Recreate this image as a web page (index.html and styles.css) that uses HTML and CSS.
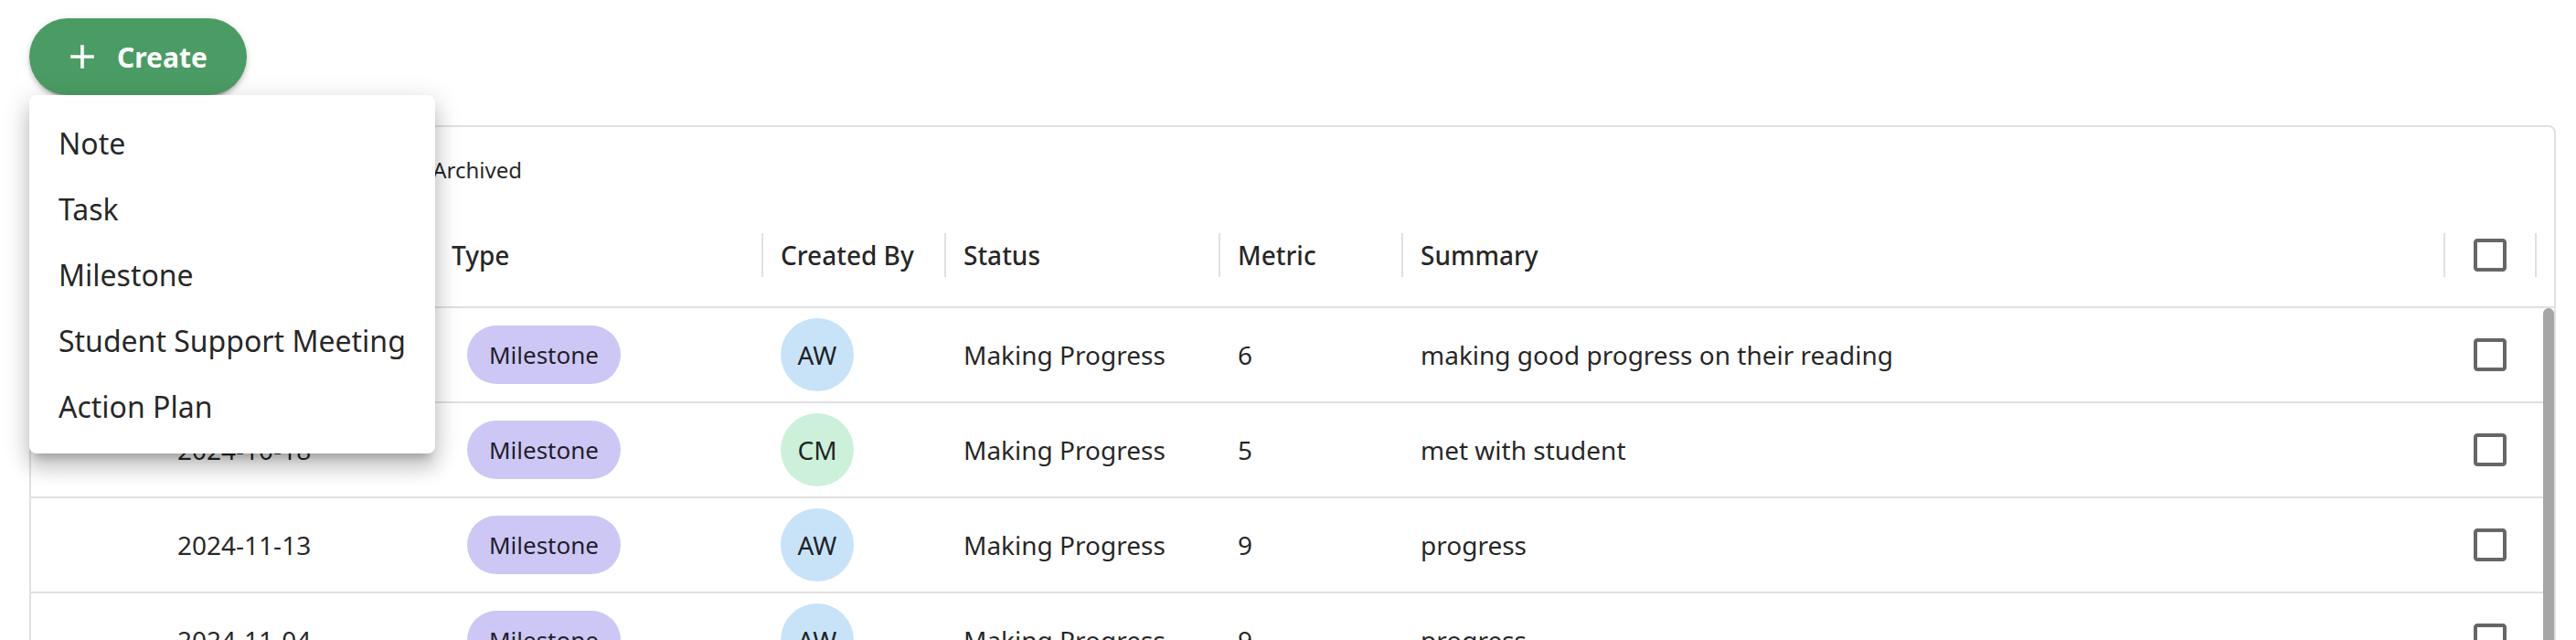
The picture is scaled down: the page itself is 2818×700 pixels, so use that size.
FILE: index.html
```
<!DOCTYPE html>
<html>
<head>
<meta charset="utf-8">
<title>Records</title>
<link rel="stylesheet" href="styles.css">
</head>
<body>
<div class="toolbarTop">
<button class="createBtn" type="button">
<svg viewBox="0 0 24 24"><path d="M19 13h-6v6h-2v-6H5v-2h6V5h2v6h6z"/></svg>
Create
</button>
</div>

<div class="gridCard">
<div class="gridTools">
<span class="switch"><span class="knob"></span></span>
<span class="toolLabel">Show Archived</span>
</div>

<div class="gridHead">
<div class="hcell c0"></div>
<div class="hcell cDate">Date</div>
<div class="hcell cType">Type</div>
<div class="hcell cBy">Created By</div>
<div class="hcell cStatus">Status</div>
<div class="hcell cMetric">Metric</div>
<div class="hcell cSum">Summary</div>
<div class="hcell cCheck"><svg class="box" viewBox="0 0 24 24"><path d="M19 5v14H5V5h14m0-2H5c-1.11 0-2 .9-2 2v14c0 1.1.89 2 2 2h14c1.1 0 2-.9 2-2V5c0-1.1-.9-2-2-2z"/></svg></div>
<div class="hfill"></div>
</div>

<div class="gridBody">
<div class="rows">
<div class="row">
<div class="cell c0"></div>
<div class="cell cDate">2024-11-20</div>
<div class="cell cType"><span class="chip">Milestone</span></div>
<div class="cell cBy"><span class="avatar blue">AW</span></div>
<div class="cell cStatus">Making Progress</div>
<div class="cell cMetric">6</div>
<div class="cell cSum">making good progress on their reading</div>
<div class="cell cCheck"><svg class="box" viewBox="0 0 24 24"><path d="M19 5v14H5V5h14m0-2H5c-1.11 0-2 .9-2 2v14c0 1.1.89 2 2 2h14c1.1 0 2-.9 2-2V5c0-1.1-.9-2-2-2z"/></svg></div>
</div>
<div class="row">
<div class="cell c0"></div>
<div class="cell cDate">2024-10-18</div>
<div class="cell cType"><span class="chip">Milestone</span></div>
<div class="cell cBy"><span class="avatar green">CM</span></div>
<div class="cell cStatus">Making Progress</div>
<div class="cell cMetric">5</div>
<div class="cell cSum">met with student</div>
<div class="cell cCheck"><svg class="box" viewBox="0 0 24 24"><path d="M19 5v14H5V5h14m0-2H5c-1.11 0-2 .9-2 2v14c0 1.1.89 2 2 2h14c1.1 0 2-.9 2-2V5c0-1.1-.9-2-2-2z"/></svg></div>
</div>
<div class="row">
<div class="cell c0"></div>
<div class="cell cDate">2024-11-13</div>
<div class="cell cType"><span class="chip">Milestone</span></div>
<div class="cell cBy"><span class="avatar blue">AW</span></div>
<div class="cell cStatus">Making Progress</div>
<div class="cell cMetric">9</div>
<div class="cell cSum">progress</div>
<div class="cell cCheck"><svg class="box" viewBox="0 0 24 24"><path d="M19 5v14H5V5h14m0-2H5c-1.11 0-2 .9-2 2v14c0 1.1.89 2 2 2h14c1.1 0 2-.9 2-2V5c0-1.1-.9-2-2-2z"/></svg></div>
</div>
<div class="row">
<div class="cell c0"></div>
<div class="cell cDate">2024-11-04</div>
<div class="cell cType"><span class="chip">Milestone</span></div>
<div class="cell cBy"><span class="avatar blue">AW</span></div>
<div class="cell cStatus">Making Progress</div>
<div class="cell cMetric">9</div>
<div class="cell cSum">progress</div>
<div class="cell cCheck"><svg class="box" viewBox="0 0 24 24"><path d="M19 5v14H5V5h14m0-2H5c-1.11 0-2 .9-2 2v14c0 1.1.89 2 2 2h14c1.1 0 2-.9 2-2V5c0-1.1-.9-2-2-2z"/></svg></div>
</div>
</div>
<div class="scrollTrack"><div class="scrollThumb"></div></div>
</div>
</div>

<!-- open create menu -->
<div class="createMenu">
<div class="menuItem">Note</div>
<div class="menuItem">Task</div>
<div class="menuItem">Milestone</div>
<div class="menuItem">Student Support Meeting</div>
<div class="menuItem">Action Plan</div>
</div>
</body>
</html>
```

FILE: styles.css
```
*{
box-sizing:border-box;
}
html,body{
margin:0;
height:700px;
overflow:hidden;
}
body{
position:relative;
padding:20px 22px 0 32px;
background:#fff;
color:rgba(0,0,0,0.87);
font-family:"Noto Sans",sans-serif;
}
.toolbarTop{
display:flex;
}
.createBtn{
display:inline-flex;
align-items:center;
height:84px;
padding:0 43px 0 44px;
border:none;
border-radius:42px;
background:#4b9c64;
color:#fff;
font-family:inherit;
font-size:30px;
font-weight:700;
box-shadow:0 6px 2px -4px rgba(0,0,0,0.2),0 4px 4px 0 rgba(0,0,0,0.14),0 2px 10px 0 rgba(0,0,0,0.12);
}
.createBtn svg{
width:44px;
height:44px;
margin:0 16px 0 -8px;
fill:#fff;
}
.createMenu{
position:absolute;
top:104px;
left:32px;
width:444px;
padding:16px 0;
background:#fff;
border-radius:8px;
box-shadow:0 10px 10px -6px rgba(0,0,0,0.2),0 16px 20px 2px rgba(0,0,0,0.14),0 6px 28px 4px rgba(0,0,0,0.12);
}
.menuItem{
display:flex;
align-items:center;
height:72px;
padding:0 32px;
font-size:32px;
}
.gridCard{
margin-top:33px;
border:2px solid #e0e0e0;
border-radius:8px;
}
.gridTools{
display:flex;
align-items:center;
gap:16px;
height:82px;
padding:10px 0 0 300px;
font-size:24px;
}
.switch{
position:relative;
width:56px;
height:28px;
border-radius:14px;
background:#bdbdbd;
}
.knob{
position:absolute;
top:2px;
left:2px;
width:24px;
height:24px;
border-radius:50%;
background:#fff;
}
.gridHead{
display:flex;
height:116px;
padding-top:2px;
border-bottom:2px solid #e0e0e0;
}
.hcell,.cell{
display:flex;
align-items:center;
flex-shrink:0;
padding:0 20px;
font-size:28px;
white-space:nowrap;
}
.hcell{
position:relative;
font-weight:500;
}
.hcell::after{
content:"";
position:absolute;
right:-1px;
top:32px;
width:2px;
height:48px;
background:#e0e0e0;
}
.hfill{
flex:1;
}
.c0{width:140px;}
.cDate{width:300px;}
.cType{width:360px;}
.cBy{width:200px;}
.cStatus{width:300px;}
.cMetric{width:200px;}
.cSum{width:1140px;}
.cCheck{
width:100px;
justify-content:center;
padding:0;
}
.box{
width:48px;
height:48px;
fill:rgba(0,0,0,0.6);
}
.gridBody{
display:flex;
}
.rows{
flex:1;
}
.row{
display:flex;
height:104px;
border-bottom:2px solid #e0e0e0;
}
.chip{
display:inline-flex;
align-items:center;
height:64px;
margin-left:17px;
padding:0 24px;
border-radius:32px;
background:#cdc7f5;
font-size:26px;
}
.avatar{
display:flex;
align-items:center;
justify-content:center;
width:80px;
height:80px;
border-radius:50%;
font-size:28px;
}
.blue{background:#c8e3f8;}
.green{background:#cdf0da;}
.scrollTrack{
width:12px;
}
.scrollThumb{
height:600px;
border-radius:6px 6px 0 0;
background:#a6a6a6;
}
```
